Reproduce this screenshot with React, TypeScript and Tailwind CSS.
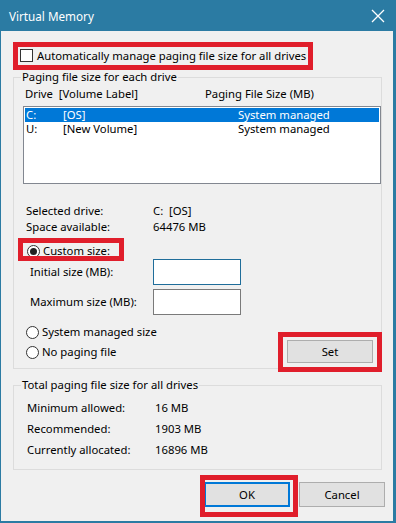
import React from 'react'

const font = { fontFamily: '"Noto Sans", "Open Sans", sans-serif' }

function Radio({ checked }: { checked?: boolean }) {
  return (
    <span className="w-[13px] h-[13px] rounded-full border border-[#333] bg-white flex items-center justify-center shrink-0">
      {checked && <span className="w-[7px] h-[7px] rounded-full bg-[#222]" />}
    </span>
  )
}

function Mark({ className }: { className: string }) {
  // red annotation frame drawn over the control
  return <span className={`absolute border-[5px] border-[#e01e2b] pointer-events-none ${className}`} />
}

export default function App() {
  return (
    <div className="w-[396px] h-[523px] bg-[#2b7ba3] flex flex-col text-[11.3px] text-black leading-[14px]" style={font}>
      {/* Title bar */}
      <div className="h-[31px] flex items-center justify-between pl-[9px] pr-[10px] text-white shrink-0">
        <span className="text-[11.7px]">Virtual Memory</span>
        <svg width="14" height="14" viewBox="0 0 14 14" className="mr-[1px]">
          <path d="M1 1L13 13M13 1L1 13" stroke="white" strokeWidth="1.3" />
        </svg>
      </div>

      {/* Body */}
      <div className="flex-1 bg-[#f0f0f0] ml-[1px] mr-[3px] mb-[2px] flex flex-col">
        {/* Auto manage checkbox */}
        <div className="relative h-[15px] mt-[17px] ml-[19px] flex items-center gap-[4px]">
          <span className="w-[13px] h-[13px] border border-[#333] bg-white shrink-0" />
          <span>Automatically manage paging file size for all drives</span>
          <Mark className="left-[-7px] top-[-6px] w-[300px] h-[28px]" />
        </div>

        {/* Paging file size for each drive */}
        <fieldset className="mt-[6px] ml-[12px] w-[369px] border border-[#dcdcdc] px-0 pb-[5px]">
          <legend className="ml-[7px] px-[1px] h-[16px] leading-[16px]">Paging file size for each drive</legend>

          <div className="h-[16px] mt-[1px] ml-[11px] flex items-center">
            <span className="w-[180px]">Drive&nbsp;&nbsp;[Volume Label]</span>
            <span>Paging File Size (MB)</span>
          </div>

          <div className="mt-[4px] ml-[9px] w-[358px] h-[78px] border border-[#828790] bg-white p-[1px]">
            <div className="h-[14px] flex items-center bg-[#0078d7] text-white">
              <span className="w-[38px] pl-[1px]">C:</span>
              <span className="w-[175px]">[OS]</span>
              <span>System managed</span>
            </div>
            <div className="h-[14px] flex items-center">
              <span className="w-[38px] pl-[1px]">U:</span>
              <span className="w-[175px]">[New Volume]</span>
              <span>System managed</span>
            </div>
          </div>

          <div className="mt-[19px] ml-[12px]">
            <div className="h-[16px] flex items-center">
              <span className="w-[127px]">Selected drive:</span>
              <span>C:&nbsp;&nbsp;[OS]</span>
            </div>
            <div className="h-[16px] flex items-center">
              <span className="w-[127px]">Space available:</span>
              <span>64476 MB</span>
            </div>
          </div>

          <div className="relative w-fit h-[16px] mt-[8px] ml-[13px] flex items-center gap-[3px]">
            <Radio checked />
            <span>Custom size:</span>
            <Mark className="left-[-9px] top-[-5px] w-[106px] h-[23px]" />
          </div>

          <div className="ml-[16px] flex flex-col gap-[4px]">
            <div className="flex items-center">
              <span className="w-[123px]">Initial size (MB):</span>
              <div className="w-[88px] h-[26px] border border-[#1f6d9a] bg-white" />
            </div>
            <div className="flex items-center">
              <span className="w-[123px]">Maximum size (MB):</span>
              <div className="w-[88px] h-[26px] border border-[#7a7a7a] bg-white" />
            </div>
          </div>

          <div className="mt-[9px] flex items-start justify-between">
            <div className="ml-[12px] flex flex-col gap-[4px]">
              <div className="h-[16px] flex items-center gap-[3px]">
                <Radio />
                <span>System managed size</span>
              </div>
              <div className="h-[16px] flex items-center gap-[3px]">
                <Radio />
                <span>No paging file</span>
              </div>
            </div>
            <button className="relative mt-[16px] mr-[8px] w-[86px] h-[23px] bg-[#e1e1e1] border border-[#adadad]">
              Set
              <Mark className="left-[-10px] top-[-9px] w-[104px] h-[40px]" />
            </button>
          </div>
        </fieldset>

        {/* Total paging file size */}
        <fieldset className="mt-[8px] ml-[12px] w-[369px] border border-[#dcdcdc] px-0 pb-[11px]">
          <legend className="ml-[7px] px-[1px] h-[16px] leading-[16px]">Total paging file size for all drives</legend>
          <div className="mt-[7px] ml-[13px] flex flex-col gap-[5px]">
            <div className="h-[16px] flex items-center">
              <span className="w-[128px]">Minimum allowed:</span>
              <span>16 MB</span>
            </div>
            <div className="h-[16px] flex items-center">
              <span className="w-[128px]">Recommended:</span>
              <span>1903 MB</span>
            </div>
            <div className="h-[16px] flex items-center">
              <span className="w-[128px]">Currently allocated:</span>
              <span>16896 MB</span>
            </div>
          </div>
        </fieldset>

        {/* Dialog buttons */}
        <div className="mt-[12px] mr-[8px] flex justify-end gap-[9px]">
          <button className="relative w-[86px] h-[25px] bg-[#e1e1e1] border-2 border-[#0078d7]">
            OK
            <Mark className="left-[-6px] top-[-9px] w-[98px] h-[42px]" />
          </button>
          <button className="w-[86px] h-[25px] bg-[#e1e1e1] border border-[#adadad]">Cancel</button>
        </div>
      </div>
    </div>
  )
}
